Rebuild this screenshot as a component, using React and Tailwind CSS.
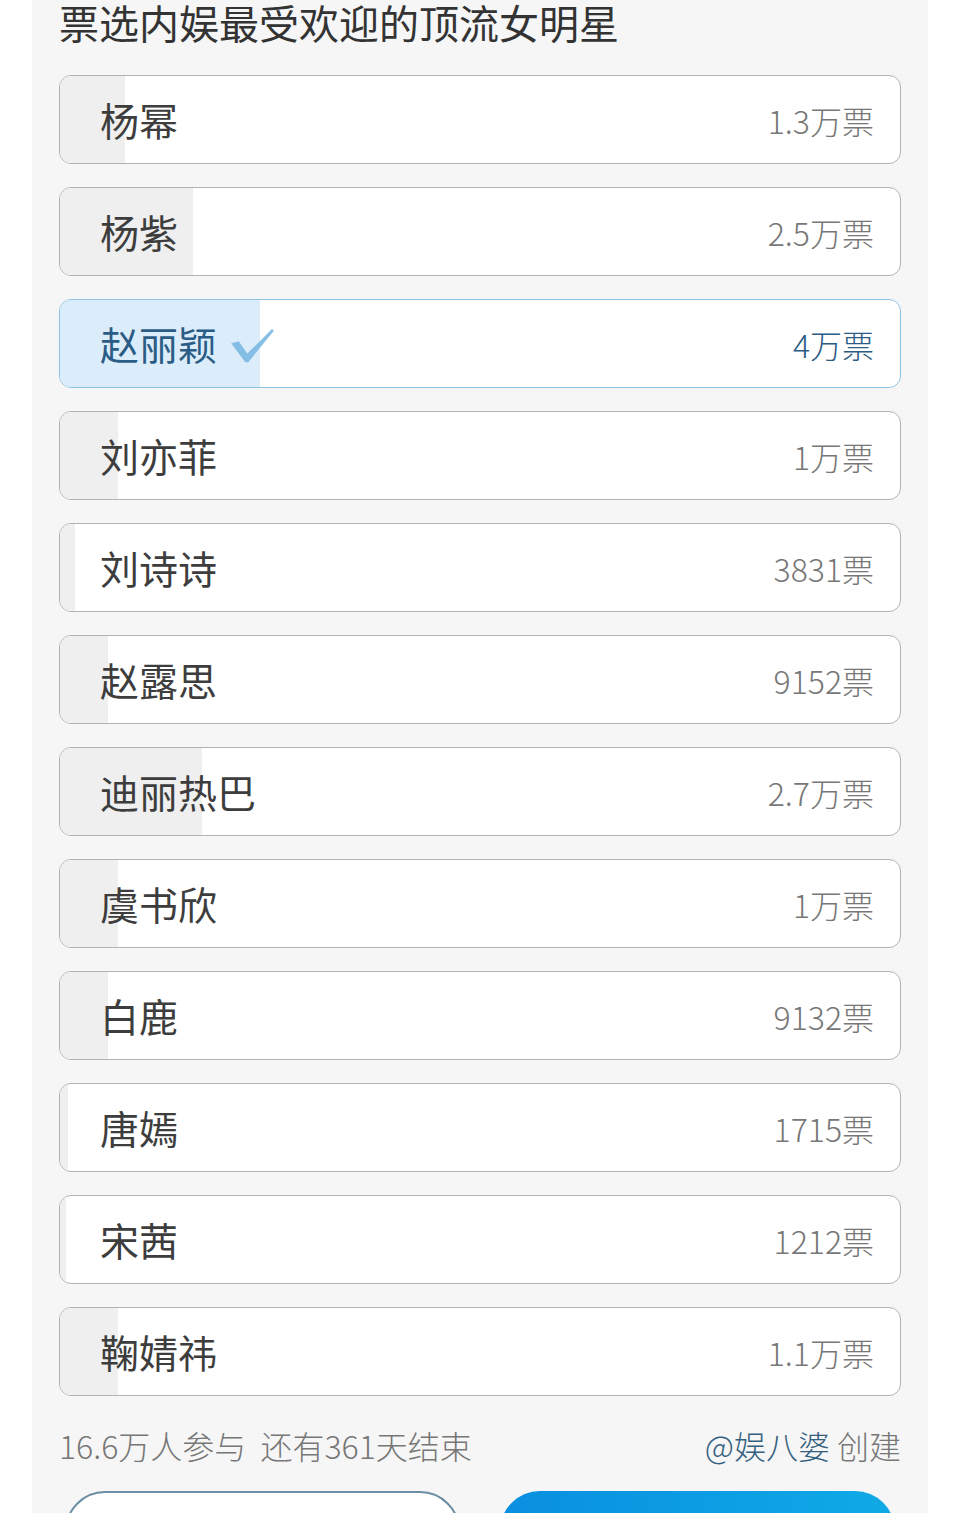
const options = [
  { name: "杨幂", votes: "1.3万票", bar: 65 },
  { name: "杨紫", votes: "2.5万票", bar: 133 },
  { name: "赵丽颖", votes: "4万票", bar: 200, picked: true },
  { name: "刘亦菲", votes: "1万票", bar: 58 },
  { name: "刘诗诗", votes: "3831票", bar: 15 },
  { name: "赵露思", votes: "9152票", bar: 48 },
  { name: "迪丽热巴", votes: "2.7万票", bar: 142 },
  { name: "虞书欣", votes: "1万票", bar: 58 },
  { name: "白鹿", votes: "9132票", bar: 48 },
  { name: "唐嫣", votes: "1715票", bar: 8 },
  { name: "宋茜", votes: "1212票", bar: 6 },
  { name: "鞠婧祎", votes: "1.1万票", bar: 58 },
];

const Check = () => (
  <svg width="48" height="38" viewBox="0 0 50 40" className="ml-[12px] mt-[4px]">
    <path
      d="M2 17 L10 15 L19 28 L45 2 L47 4 L20 37 L17 37 Z"
      fill="#7ab8e2"
      opacity="0.9"
    />
  </svg>
);

const Option = ({ name, votes, bar, picked }) => (
  <div
    className={`relative h-[89px] rounded-[12px] border overflow-hidden bg-white ${
      picked ? "border-[#8fc3e6]" : "border-[#b3b3b3]"
    }`}
  >
    <div
      className={`absolute left-0 top-0 bottom-0 ${
        picked ? "bg-[#dbedfb]" : "bg-[#efefef]"
      }`}
      style={{ width: bar }}
    />
    <div className="relative h-full flex items-center justify-between pl-[40px] pr-[26px]">
      <div className="flex items-center">
        <span
          className={`text-[39px] leading-none ${
            picked ? "text-[#2b5c85]" : "text-[#3d3d3d]"
          }`}
        >
          {name}
        </span>
        {picked && <Check />}
      </div>
      <span
        className={`text-[32px] leading-none font-light ${
          picked ? "text-[#2b5c85]" : "text-[#777777]"
        }`}
      >
        {votes}
      </span>
    </div>
  </div>
);

export default function App() {
  return (
    <div
      className="bg-white h-[1513px] overflow-hidden px-[32px]"
      style={{ fontFamily: '"Noto Sans CJK SC", "Noto Sans", sans-serif' }}
    >
      <div className="bg-[#f6f6f6] h-full px-[27px]">
        <h1 className="text-[40px] leading-[44px] h-[44px] text-[#333333] font-normal">
          票选内娱最受欢迎的顶流女明星
        </h1>
        <div className="mt-[31px] flex flex-col gap-[23px]">
          {options.map((o) => (
            <Option key={o.name} {...o} />
          ))}
        </div>
        <div className="mt-[29px] flex items-center justify-between h-[40px] text-[32px] leading-none font-light text-[#777777]">
          <span>16.6万人参与&nbsp;&nbsp;还有361天结束</span>
          <span>
            <span className="text-[#34607f]">@娱八婆</span> 创建
          </span>
        </div>
        <div className="mt-[26px] grid grid-cols-2 gap-[40px] px-[6px]">
          <div className="h-[80px] rounded-[40px] border-2 border-[#6a8fa4] bg-white" />
          <div className="h-[80px] rounded-[40px] bg-gradient-to-r from-[#0a8fe0] to-[#10aae6]" />
        </div>
      </div>
    </div>
  );
}
